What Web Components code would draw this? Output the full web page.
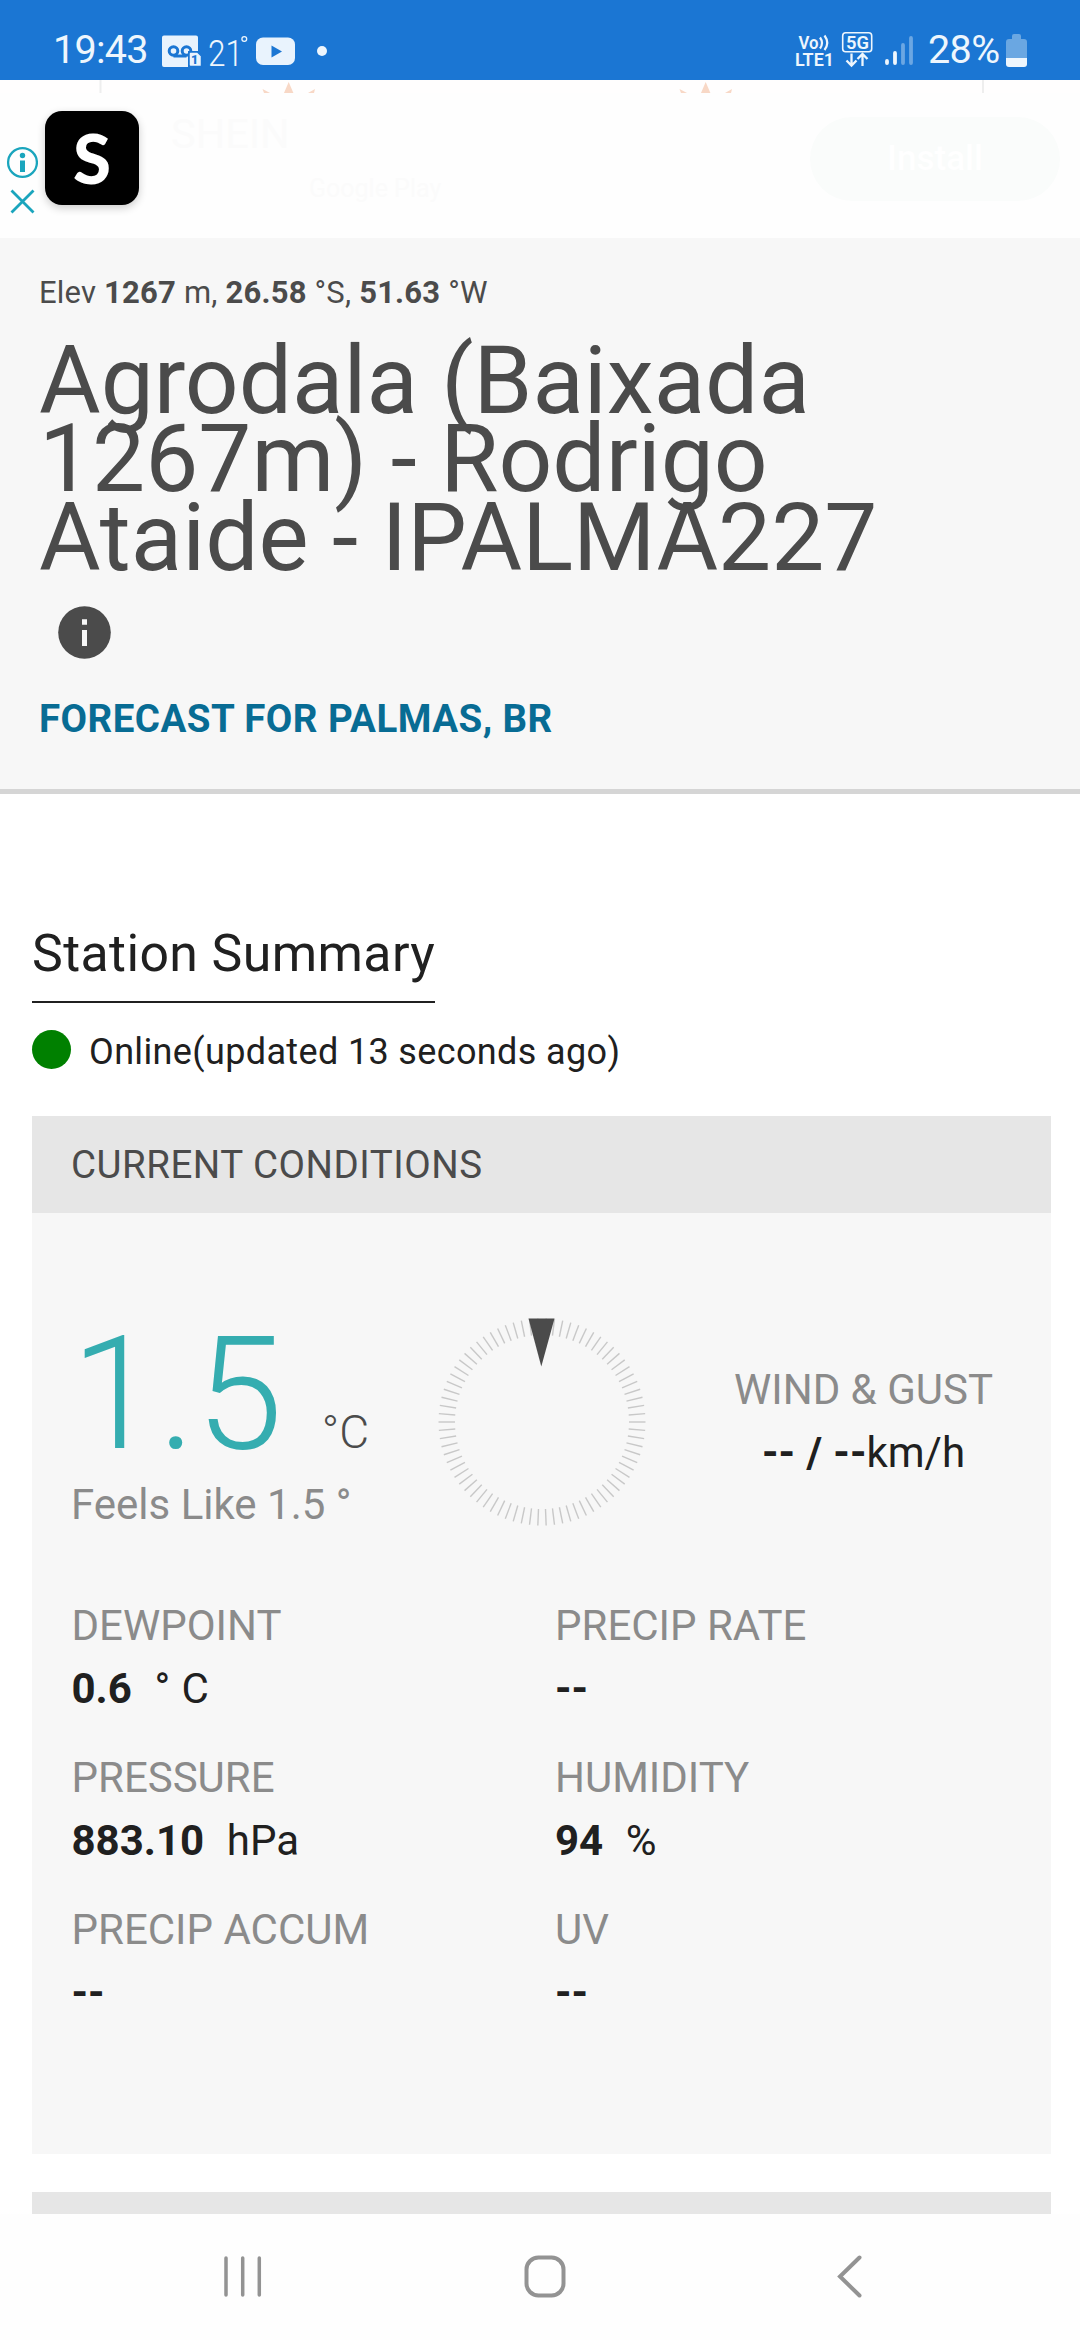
<!DOCTYPE html>
<html lang="en">
<head>
<meta charset="utf-8">
<title>Weather station</title>
<style>
html,body{margin:0;padding:0;background:#fefefe}
body{width:1080px;height:2340px;overflow:hidden;font-family:Roboto,"Liberation Sans",sans-serif;color:#202020}
</style>
</head>
<body>
<weather-app></weather-app>
<script>
const define = (name, html) => customElements.define(name, class extends HTMLElement {
  constructor(){
    super();
    const t = document.createElement('template');
    t.innerHTML = typeof html === 'function' ? html() : html;
    this.attachShadow({mode:'open'}).appendChild(t.content.cloneNode(true));
  }
});

define('status-bar', `
<style>
:host{display:flex;height:80px;box-sizing:border-box;background:#1b76d3;color:#eef6fd;justify-content:space-between;padding:30px 52px 0 53px}
div{display:flex;align-items:flex-start}
svg{display:block;overflow:visible}
.t{font-size:39.5px;line-height:40px;white-space:nowrap}
text{font-family:Roboto,sans-serif;fill:#eef6fd}
</style>
<div>
  <span class="t" style="width:109px;letter-spacing:-.7px">19:43</span>
  <svg width="40" height="40" viewBox="0 0 40 40"><path d="M2 5.500h32a2 2 0 0 1 2 2V21h-10v16H2a2 2 0 0 1-2-2V7.500a2 2 0 0 1 2-2z" fill="#e9f3fd"/><g fill="none" stroke="#1b76d3" stroke-width="3"><circle cx="11.500" cy="21" r="4.300"/><circle cx="24.500" cy="21" r="4.300"/><path d="M11.500 26h13"/></g><path d="M28.500 22h7l4 4v10.500h-11a1.500 1.500 0 0 1-1.500-1.500V23.500a1.500 1.500 0 0 1 1.500-1.500z" fill="#e9f3fd" stroke="#1b76d3" stroke-width="1.500"/><text x="29" y="34.300" font-size="12.500" font-weight="900" style="fill:#1b76d3">1</text></svg>
  <svg width="54" height="40"><text x="6" y="36" font-size="37" font-weight="350" textLength="35" lengthAdjust="spacingAndGlyphs">21</text><circle cx="42.300" cy="9" r="2.400" fill="none" stroke="#eef6fd" stroke-width="1.300"/></svg>
  <svg width="39" height="40"><rect y="7.500" width="39" height="27.500" rx="7" fill="#e9f3fd"/><path d="M15.500 15.500v12l10.500-6z" fill="#1b76d3"/></svg>
  <svg width="40" height="40"><circle cx="27" cy="21" r="5" fill="#eef6fd"/></svg>
</div>
<div>
  <svg width="47" height="40" viewBox="0 0 47 40"><text x="3.500" y="18.500" font-size="18.500" font-weight="600" textLength="20" lengthAdjust="spacingAndGlyphs">Vo</text><path d="M25 7.500q4 5.500 0 11M29.500 5.500q5.500 7.500 0 14.500" fill="none" stroke="#eef6fd" stroke-width="2.200"/><text x="0" y="36" font-size="18" font-weight="600" textLength="39" lengthAdjust="spacingAndGlyphs">LTE1</text></svg>
  <svg width="43" height="40" viewBox="0 0 43 40"><rect x=".7" y="2.700" width="29" height="19" rx="3" fill="none" stroke="#eef6fd" stroke-width="1.600"/><text x="4" y="19" font-size="18.500" font-weight="600" textLength="23" lengthAdjust="spacingAndGlyphs">5G</text><path d="M9.500 23.500v12M4.500 30.500l5 5 5-5M20.500 36V24M15.500 29l5-5 5 5" fill="none" stroke="#eef6fd" stroke-width="2.300"/></svg>
  <svg width="43" height="40" viewBox="0 0 43 40"><g stroke="#eef6fd" stroke-width="3.800" stroke-linecap="round"><path d="M2 31v2M10 23v10"/><path d="M18 15v18M26 8v25" opacity=".38"/></g></svg>
  <span class="t" style="width:78px;letter-spacing:-.6px">28%</span>
  <svg width="22" height="40" viewBox="0 0 22 40"><path d="M6 7V6q0-2 2-2h5q2 0 2 2v3h3q3 0 3 3v16H0V12q0-3 3-3h3z" fill="#6aa7e2"/><path d="M0 28h21v6q0 3-3 3H3q-3 0-3-3z" fill="#eef6fd"/></svg>
</div>`);

define('ad-banner', `
<style>
:host{display:flex;position:relative;height:158px;background:#fefefe;align-items:flex-start;box-sizing:border-box}
.edge{position:absolute;left:0;top:0}
.marks{display:block;margin-left:6px;margin-top:66px}
.logo{width:94px;height:94px;margin:31px 0 0 7px;border-radius:17px;background:#000;color:#fff;box-shadow:0 3px 8px rgba(0,0,0,.2);display:flex;justify-content:center;font:900 69px/93px Lato,sans-serif}
.copy{display:flex;flex-direction:column;margin:30px 0 0 32px;width:300px;color:#fbfbfb}
.copy b{font:400 41.500px/48px Roboto,sans-serif}
.copy span{font:400 25px/32px Roboto,sans-serif;margin:15px 0 0 138px;white-space:nowrap;color:#fbfbfb}
.btn{margin:37px 20px 0 auto;width:250px;height:84px;border-radius:42px;background:#fafcfb;color:#fff;display:flex;justify-content:center;font:500 35px/84px Roboto,sans-serif}
</style>
<svg class="edge" width="1080" height="13"><rect width="1080" height="13" fill="#fffefe"/><path d="M100.500 0v13M983 0v13" stroke="#eeeeee" stroke-width="2"/><g fill="#f8d8c6"><path d="M288.700 2l4.700 11h-9.400zM262.500 9l7.500 4h-6zM315 9l-7 4h6z"/><path transform="translate(417)" d="M288.700 2l4.700 11h-9.400zM262.500 9l7.500 4h-6zM315 9l-7 4h6z"/></g></svg>
<svg class="marks" width="32" height="70" viewBox="0 0 32 70"><g fill="none" stroke="#1aa5bd" stroke-width="2.300"><circle cx="16.500" cy="16.500" r="14.400"/><path d="M5.500 44.500l22 22M27.500 44.500l-22 22" stroke-width="2.800"/></g><circle cx="16.500" cy="9.500" r="2.700" fill="#1aa5bd"/><path d="M14 14.500h5v11.500h-5z" fill="#1aa5bd"/></svg>
<div class="logo">S</div>
<div class="copy"><b>SHEIN</b><span>Google Play</span></div>
<div class="btn">Install</div>`);

define('station-header', `
<style>
:host{display:flex;flex-direction:column;height:556px;box-sizing:border-box;padding:37px 40px 0 39px;background:#f7f7f7;border-bottom:5px solid #d5d5d5;color:#4b4b4b}
.elev{font-size:31px;line-height:36px;letter-spacing:.2px}
h1{margin:30.500px 0 0;font-weight:400;font-size:94.500px;line-height:78.600px;white-space:nowrap}
svg{display:block;margin:28.500px 0 0 19px}
a{margin-top:37.200px;font-weight:700;font-size:38.500px;line-height:46px;letter-spacing:.45px;color:#086c94}
</style>
<div class="elev">Elev <b>1267</b> m, <b>26.58</b> °S, <b>51.63</b> °W</div>
<h1>Agrodala (Baixada<br>1267m) - Rodrigo<br>Ataide - IPALMA227</h1>
<svg width="53" height="53" viewBox="0 0 53 53"><circle cx="26.500" cy="26.500" r="26.300" fill="#4b4b4b"/><path d="M24 13.300h5v5.400h-5zM24 24h5v16h-5z" fill="#f7f7f7"/></svg>
<a>FORECAST FOR PALMAS, BR</a>`);

define('station-status', `
<style>
:host{display:flex;flex-direction:column;align-items:flex-start;padding:129.500px 32px 0}
h2{margin:0;font-weight:400;font-size:51.800px;line-height:60px;letter-spacing:.4px;padding-bottom:17.500px;border-bottom:2px solid #202020;white-space:nowrap}
div{display:flex;margin-top:27px;height:41px}
i{width:39px;height:39px;border-radius:50%;background:#008000;margin-right:18px}
span{font-size:36px;line-height:40px;letter-spacing:.36px;padding-top:1.500px;white-space:nowrap}
</style>
<h2>Station Summary</h2>
<div><i></i><span>Online(updated 13 seconds ago)</span></div>`);

define('wind-compass', () => {
  let ticks = '';
  for (let i = 0; i < 78; i++) ticks += `<path d="M87 0H103.500" transform="rotate(${i * 360 / 78})"/>`;
  return `<style>:host{display:block}svg{display:block}</style>
<svg width="210" height="210" viewBox="-105 -105 210 210"><g stroke="#c8c8c8" stroke-width="1.400">${ticks}</g><path d="M-13.500-103.500H12.500L-.7-55.500z" fill="#4b4b4b"/></svg>`;
});

define('stat-item', `
<style>
:host{display:block;font-size:42px;line-height:63px;white-space:nowrap}
.l{color:#8b8b8b}
.v{color:#202020;white-space:pre;word-spacing:.9px}
::slotted(b){font-weight:700}
</style>
<div class="l"><slot name="label"></slot></div>
<div class="v"><slot></slot></div>`);

define('conditions-card', `
<style>
:host{display:flex;flex-direction:column;margin:45px 29px 0 32px;height:1038px;background:#f7f7f7}
header{height:97px;box-sizing:border-box;padding-left:39px;background:#e6e6e6;color:#4b4b4b;font-size:38.500px;line-height:97px;letter-spacing:.5px}
.top{display:flex;padding:103.500px 0 0 40px;height:277px;box-sizing:content-box}
.temp{width:365px;padding-top:12.500px;white-space:nowrap}
.n{display:flex;align-items:baseline;font-weight:300;font-size:157px;line-height:130px;color:#35adb0;margin-left:-1px}
.n small{font-size:46px;line-height:50px;color:#4b4b4b;margin-left:39px}
.f{margin-top:20.500px;margin-left:-1px;font-size:42px;line-height:50px;color:#8b8b8b}
.wind{flex:1;padding:41px 0 0 29px;text-align:center}
.grid{display:grid;grid-template-columns:483.500px 1fr;row-gap:26px;padding-left:39.500px}
</style>
<header>CURRENT CONDITIONS</header>
<div class="top">
  <div class="temp"><div class="n">1.5<small>°C</small></div><div class="f">Feels Like 1.5 °</div></div>
  <wind-compass></wind-compass>
  <stat-item class="wind"><span slot="label">WIND &amp; GUST</span><b>-- / --</b>km/h</stat-item>
</div>
<div class="grid">
  <stat-item><span slot="label">DEWPOINT</span><b>0.6</b>&nbsp; ° C</stat-item>
  <stat-item><span slot="label">PRECIP RATE</span><b>--</b></stat-item>
  <stat-item><span slot="label">PRESSURE</span><b>883.10</b>&nbsp; hPa</stat-item>
  <stat-item><span slot="label">HUMIDITY</span><b>94</b>&nbsp; %</stat-item>
  <stat-item><span slot="label">PRECIP ACCUM</span><b>--</b></stat-item>
  <stat-item><span slot="label">UV</span><b>--</b></stat-item>
</div>`);

define('next-card', `<style>:host{display:block;height:22px;margin:38px 29px 0 32px;background:#e6e6e6}</style>`);

define('nav-bar', `
<style>
:host{display:flex;height:126px;background:#fefefe;align-items:flex-start;box-sizing:border-box;padding:41px 0 0 223px}
svg{display:block}
g,path{fill:none;stroke:#939393;stroke-width:4;stroke-linecap:round}
.home{margin:0 270px 0 261px}
</style>
<svg width="40" height="43"><path d="M3 3v37M19.700 3v37M36.300 3v37" style="stroke-width:3.500"/></svg>
<svg class="home" width="42" height="43"><g><rect x="2.500" y="2.500" width="37" height="38" rx="12"/></g></svg>
<svg width="26" height="43"><path d="M23.500 2.500L4 21.500l19.500 19"/></svg>`);

define('weather-app', `
<style>:host{display:flex;flex-direction:column;width:1080px;height:2340px;background:#fff}
:host>*{flex:none}</style>
<status-bar></status-bar><ad-banner></ad-banner><station-header></station-header>
<station-status></station-status><conditions-card></conditions-card><next-card></next-card><nav-bar></nav-bar>`);
</script>
</body>
</html>
